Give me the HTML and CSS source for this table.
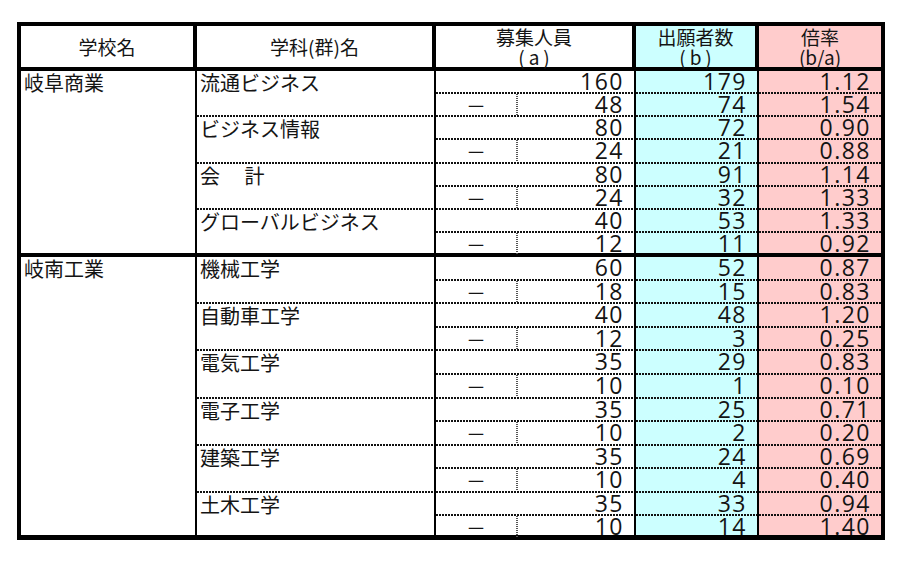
FILE: index.html
```html
<!DOCTYPE html>
<html lang="ja">
<head>
<meta charset="utf-8">
<title>募集人員と出願者数</title>
<link rel="stylesheet" href="styles.css">
</head>
<body>
<table class="sheet">
  <colgroup>
    <col class="c1"><col class="c2"><col class="c3"><col class="c4"><col class="c5">
  </colgroup>
  <thead>
    <tr class="head">
      <th>学校名</th>
      <th>学科(群)名</th>
      <th><div class="hl">募集人員</div><div class="hl par">(a)</div></th>
      <th class="app"><div class="hl">出願者数</div><div class="hl par">(b)</div></th>
      <th class="rate"><div class="hl">倍率</div><div class="hl">(b/a)</div></th>
    </tr>
  </thead>
  <tbody>
    <tr class="h23">
      <td class="school end" rowspan="8">岐阜商業</td>
      <td class="dept dot" rowspan="2">流通ビジネス</td>
      <td class="n rec dot"><div class="v">160</div></td><td class="n app dot"><div class="v">179</div></td><td class="n rate dot"><div class="v">1.12</div></td>
    </tr>
    <tr class="h23">
      <td class="rec dot"><div class="sub"><span class="dash">－</span><span class="vdot"></span><span class="subnum">48</span></div></td>
      <td class="n app dot"><div class="v">74</div></td><td class="n rate dot"><div class="v">1.54</div></td>
    </tr>
    <tr class="h23">
      <td class="dept dot" rowspan="2">ビジネス情報</td>
      <td class="n rec dot"><div class="v">80</div></td><td class="n app dot"><div class="v">72</div></td><td class="n rate dot"><div class="v">0.90</div></td>
    </tr>
    <tr class="h24">
      <td class="rec dot"><div class="sub"><span class="dash">－</span><span class="vdot"></span><span class="subnum">24</span></div></td>
      <td class="n app dot"><div class="v">21</div></td><td class="n rate dot"><div class="v">0.88</div></td>
    </tr>
    <tr class="h23">
      <td class="dept dot" rowspan="2">会　 計</td>
      <td class="n rec dot"><div class="v">80</div></td><td class="n app dot"><div class="v">91</div></td><td class="n rate dot"><div class="v">1.14</div></td>
    </tr>
    <tr class="h23">
      <td class="rec dot"><div class="sub"><span class="dash">－</span><span class="vdot"></span><span class="subnum">24</span></div></td>
      <td class="n app dot"><div class="v">32</div></td><td class="n rate dot"><div class="v">1.33</div></td>
    </tr>
    <tr class="h23">
      <td class="dept end" rowspan="2">グローバルビジネス</td>
      <td class="n rec dot"><div class="v">40</div></td><td class="n app dot"><div class="v">53</div></td><td class="n rate dot"><div class="v">1.33</div></td>
    </tr>
    <tr class="h24">
      <td class="rec end"><div class="sub"><span class="dash">－</span><span class="vdot"></span><span class="subnum">12</span></div></td>
      <td class="n app end"><div class="v">11</div></td><td class="n rate end"><div class="v">0.92</div></td>
    </tr>

    <tr class="h24">
      <td class="school last" rowspan="12">岐南工業</td>
      <td class="dept dot" rowspan="2">機械工学</td>
      <td class="n rec dot"><div class="v">60</div></td><td class="n app dot"><div class="v">52</div></td><td class="n rate dot"><div class="v">0.87</div></td>
    </tr>
    <tr class="h23">
      <td class="rec dot"><div class="sub"><span class="dash">－</span><span class="vdot"></span><span class="subnum">18</span></div></td>
      <td class="n app dot"><div class="v">15</div></td><td class="n rate dot"><div class="v">0.83</div></td>
    </tr>
    <tr class="h24">
      <td class="dept dot" rowspan="2">自動車工学</td>
      <td class="n rec dot"><div class="v">40</div></td><td class="n app dot"><div class="v">48</div></td><td class="n rate dot"><div class="v">1.20</div></td>
    </tr>
    <tr class="h23">
      <td class="rec dot"><div class="sub"><span class="dash">－</span><span class="vdot"></span><span class="subnum">12</span></div></td>
      <td class="n app dot"><div class="v">3</div></td><td class="n rate dot"><div class="v">0.25</div></td>
    </tr>
    <tr class="h24">
      <td class="dept dot" rowspan="2">電気工学</td>
      <td class="n rec dot"><div class="v">35</div></td><td class="n app dot"><div class="v">29</div></td><td class="n rate dot"><div class="v">0.83</div></td>
    </tr>
    <tr class="h24">
      <td class="rec dot"><div class="sub"><span class="dash">－</span><span class="vdot"></span><span class="subnum">10</span></div></td>
      <td class="n app dot"><div class="v">1</div></td><td class="n rate dot"><div class="v">0.10</div></td>
    </tr>
    <tr class="h23">
      <td class="dept dot" rowspan="2">電子工学</td>
      <td class="n rec dot"><div class="v">35</div></td><td class="n app dot"><div class="v">25</div></td><td class="n rate dot"><div class="v">0.71</div></td>
    </tr>
    <tr class="h24">
      <td class="rec dot"><div class="sub"><span class="dash">－</span><span class="vdot"></span><span class="subnum">10</span></div></td>
      <td class="n app dot"><div class="v">2</div></td><td class="n rate dot"><div class="v">0.20</div></td>
    </tr>
    <tr class="h23">
      <td class="dept dot" rowspan="2">建築工学</td>
      <td class="n rec dot"><div class="v">35</div></td><td class="n app dot"><div class="v">24</div></td><td class="n rate dot"><div class="v">0.69</div></td>
    </tr>
    <tr class="h24">
      <td class="rec dot"><div class="sub"><span class="dash">－</span><span class="vdot"></span><span class="subnum">10</span></div></td>
      <td class="n app dot"><div class="v">4</div></td><td class="n rate dot"><div class="v">0.40</div></td>
    </tr>
    <tr class="h23">
      <td class="dept last" rowspan="2">土木工学</td>
      <td class="n rec dot"><div class="v">35</div></td><td class="n app dot"><div class="v">33</div></td><td class="n rate dot"><div class="v">0.94</div></td>
    </tr>
    <tr class="h24">
      <td class="rec last"><div class="sub"><span class="dash">－</span><span class="vdot"></span><span class="subnum">10</span></div></td>
      <td class="n app last"><div class="v">14</div></td><td class="n rate last"><div class="v">1.40</div></td>
    </tr>
  </tbody>
</table>
</body>
</html>
```

FILE: styles.css
```css
html, body {
  margin: 0;
  padding: 0;
  background: #ffffff;
}

body {
  font-family: "Noto Sans CJK JP", "Noto Sans", sans-serif;
  color: #141414;
}

.sheet {
  margin: 22px 0 0 17px;
  width: 868px;
  table-layout: fixed;
  border-collapse: separate;
  border-spacing: 0;
  border-top: 4px solid #000;
  border-left: 4px solid #000;
}

.c1 { width: 176px; }
.c2 { width: 239px; }
.c3 { width: 200px; }
.c4 { width: 123px; }
.c5 { width: 126px; }

.head { height: 45px; }
.h23 { height: 23px; }
.h24 { height: 24px; }

th {
  padding: 0;
  font-weight: 400;
  font-size: 19px;
  line-height: 20px;
  text-align: center;
  vertical-align: middle;
  border-right: 4px solid #000;
  border-bottom: 4px solid #000;
  background: #fff;
}

.hl {
  height: 20px;
  line-height: 20px;
}

.par {
  letter-spacing: 4px;
  padding-left: 4px;
}

td {
  padding: 0;
  vertical-align: top;
  border-right: 2px solid #000;
  font-size: 20px;
  line-height: 23px;
  font-weight: 400;
  background-color: #fff;
  white-space: nowrap;
  overflow: visible;
}

.school, .dept {
  padding-left: 3px;
}

.app { background-color: #ccffff; }
.rate { background-color: #ffcccc; border-right: 4px solid #000; }
th.rate { border-right: 4px solid #000; }

.n {
  font-family: "Open Sans", "Noto Sans", sans-serif;
  font-size: 23px;
  font-weight: 400;
  letter-spacing: 1.5px;
  text-align: right;
  padding-right: 10px;
}

.v {
  height: 19px;
  line-height: 20px;
}

.dot {
  background-image: repeating-linear-gradient(90deg, #111 0 2px, transparent 2px 3px);
  background-size: 100% 2px;
  background-position: left bottom;
  background-repeat: no-repeat;
}

.end { border-bottom: 4px solid #000; }
.last { border-bottom: 5px solid #000; }

.sub {
  display: flex;
  align-items: flex-start;
  height: 19px;
}

.dash {
  width: 80px;
  text-align: center;
  font-size: 20px;
  line-height: 23px;
}

.vdot {
  flex: none;
  width: 2px;
  height: 21px;
  background-image: repeating-linear-gradient(180deg, #555 0 1px, transparent 1px 2px);
}

.subnum {
  flex: 1;
  font-family: "Open Sans", "Noto Sans", sans-serif;
  font-size: 23px;
  font-weight: 400;
  letter-spacing: 1.5px;
  line-height: 20px;
  text-align: right;
  padding-right: 10px;
}
```
